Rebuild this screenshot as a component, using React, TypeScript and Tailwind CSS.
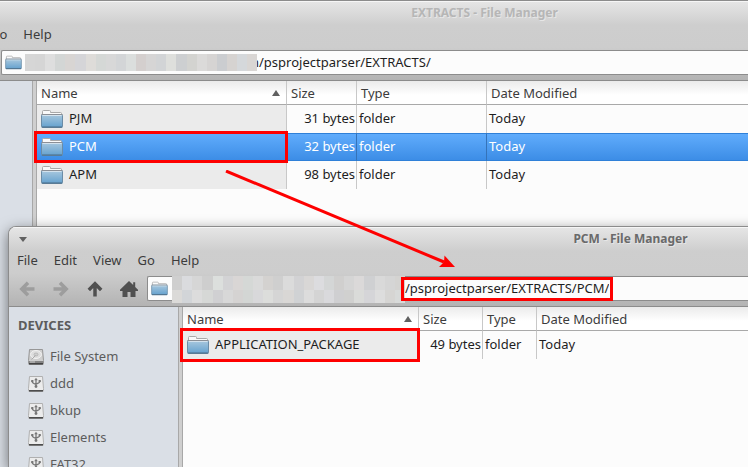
import type { ReactNode } from 'react';

const font = "font-['Noto_Sans','Open_Sans',sans-serif]";

function Folder({ className }: { className: string }) {
  return (
    <svg viewBox="0 0 22 20" className={className} aria-hidden="true">
      <defs>
        <linearGradient id="folder-front" x1="0" y1="0" x2="0" y2="1">
          <stop offset="0" stopColor="#a9c8de" />
          <stop offset="1" stopColor="#64a1ce" />
        </linearGradient>
      </defs>
      <path d="M1.5 6V2.500q0-1 1-1h6q1 0 1 1v1h10q1 0 1 1V6z" fill="#fafafa" stroke="#a9a9a9" />
      <rect x="0.5" y="5.500" width="21" height="13" rx="1" fill="url(#folder-front)" stroke="#6b8ca6" />
      <path d="M0.5 5.500h21" stroke="#8b8f96" />
      <path d="M1.500 6.500h19" stroke="#d3e2ed" />
      <path d="M1 18h20" stroke="#4b6b84" />
    </svg>
  );
}

function Drive() {
  return (
    <svg viewBox="0 0 16 16" className="size-4 shrink-0" aria-hidden="true">
      <path d="M1.500.500h13l1 11v3q0 1-1 1h-13q-1 0-1-1v-3z" fill="#cfcfcf" stroke="#979797" />
      <ellipse cx="8" cy="5.500" rx="5.500" ry="4" fill="#dedede" stroke="#f2f2f2" />
      <ellipse cx="8" cy="5.500" rx="2" ry="1.500" fill="#cfcfcf" stroke="#aaa" strokeWidth=".6" />
      <path d="M7.500 6.500 3.500 10.500" stroke="#aaa" />
      <path d="M1 12h14v3H1z" fill="#858585" />
      <path d="M1 14.800h14" stroke="#3c3c3c" strokeWidth="1.400" />
      <path d="M2 13h5" stroke="#ccc" />
    </svg>
  );
}

function UsbDrive() {
  return (
    <svg viewBox="0 0 16 16" className="size-4 shrink-0" aria-hidden="true">
      <path d="M1.500.500h13l1 12v2q0 1-1 1h-13q-1 0-1-1v-2z" fill="#ececec" stroke="#b0b0b0" />
      <path d="M1 14.800h14" stroke="#3c3c3c" strokeWidth="1.400" />
      <path d="M8 3v7M4.300 5v.8q0 1.500 3.700 2.700M11.700 5v.8q0 1.200-3.700 2.200" fill="none" stroke="#777" strokeWidth="1.300" />
      <path d="M6.200 4.200 8 1.800l1.800 2.400z" fill="#777" />
      <path d="M3.200 4h2.200v2H3.200zM10.600 4h2.200v2h-2.200z" fill="#777" />
      <circle cx="8" cy="10.500" r="1.400" fill="#777" />
    </svg>
  );
}

function Arrow({ className }: { className: string }) {
  return (
    <svg viewBox="0 0 16 16" className={`size-4 fill-none ${className}`} aria-hidden="true">
      <path d="M9 1.800 2.800 8 9 14.200M3.500 8h12" strokeWidth="3.500" />
    </svg>
  );
}

function NavButtons() {
  const cell = 'flex w-[34px] items-center justify-center';
  return (
    <div className="mr-px flex">
      <button aria-label="Back" disabled className={cell}>
        <Arrow className="stroke-[#9d9d9d]" />
      </button>
      <button aria-label="Forward" disabled className={cell}>
        <Arrow className="rotate-180 stroke-[#9d9d9d]" />
      </button>
      <button aria-label="Up" className={cell}>
        <Arrow className="rotate-90 stroke-[#505050]" />
      </button>
      <button aria-label="Home" className={cell}>
        <svg viewBox="0 0 18 16" className="h-4 w-[18px] fill-[#505050]">
          <path d="M9 0 13.200 4V1.200h2V6L18 8.800V10h-2.500v6h-5v-5h-3v5h-5v-6H0V8.800z" />
        </svg>
      </button>
    </div>
  );
}

const topRow = ['#d6d6d6', '#d5d5d5', '#dedede', '#d3d6d5', '#d8d5d3', '#d5d5d8', '#dedcd9', '#d5d8d6', '#d8d8d8', '#d3d5d7', '#dbdedd', '#d4cfce', '#d6d5d5', '#d2d4d6', '#dedfdc', '#cdcfd1', '#d3d3d0', '#dbdad9', '#d6d4d3', '#cbcdd0', '#d6d3d1', '#d5d8db', '#d9d6d4'];
const upperRow = ['#cfcfcf', '#dadbde', '#d6d6d6', '#cecece', '#dcdfdd', '#d3d3d5', '#d9d6d5', '#d5d8d6', '#dadada', '#d4d2d0', '#cfcfcf', '#dbdbdb', '#d2d2d4', '#d9d7d6', '#dcdcdf', '#d4d6d6', '#d0cfce', '#d5d5d5', '#dbd9d9', '#cfd0d2', '#d9d9d9', '#d5d5d5', '#d4d3d1'];
const lowerRow = ['#dbdad8', '#d2d5d8', '#dcdcdc', '#d6d8d6', '#d0d0d2', '#d8d8d8', '#d5d3d2', '#d3d6d4', '#d8d8da', '#dcdddb', '#d5d5d5', '#d9d7d5', '#d0d2d4', '#dcdcdc', '#d4d4d4', '#d9d9dc', '#cfcfd1', '#d0d0cf', '#dadbd9', '#d5d5d8', '#dddddd', '#d6d5d3', '#d8dad9'];

function Mosaic({ rows, className }: { rows: string[][]; className: string }) {
  return (
    <div className={`z-10 flex shrink-0 flex-col ${className}`}>
      {rows.map((row, i) => (
        <div key={i} className="flex flex-1">
          {row.map((color, j) => (
            <span key={j} className="flex-1" style={{ backgroundColor: color }} />
          ))}
        </div>
      ))}
    </div>
  );
}

type Entry = { name: string; size: string; selected?: boolean; marked?: boolean };

function FileTable({ entries, cols }: { entries: Entry[]; cols: [string, string, string] }) {
  const th = 'h-6 border-b border-[#a9a9a9] bg-linear-to-b from-[#ebebeb] to-white to-60% pl-1 text-left font-normal text-[#3c3c3c]';
  const line = 'border-r border-r-[#c8c8c8]';
  return (
    <table className="w-full table-fixed border-separate border-spacing-0">
      <colgroup>
        <col className={cols[0]} />
        <col className={cols[1]} />
        <col className={cols[2]} />
        <col />
      </colgroup>
      <thead>
        <tr>
          <th className={`${th} ${line}`}>
            <div className="flex items-center justify-between pr-1.5">
              Name
              <svg viewBox="0 0 8 6" className="h-1.5 w-2 fill-[#606060]"><path d="M4 0 8 6H0z" /></svg>
            </div>
          </th>
          <th className={`${th} ${line}`}>Size</th>
          <th className={`${th} ${line}`}>Type</th>
          <th className={th}>Date Modified</th>
        </tr>
      </thead>
      <tbody>
        {entries.map((e) => {
          const tone = e.selected
            ? 'border-y border-y-[#2f80d8] bg-linear-to-b from-[#60acfc] to-[#3c8de6] text-white'
            : 'text-[#1e1e1e]';
          const edge = e.selected ? 'border-r border-r-[#3573b8]' : line;
          return (
            <tr key={e.name}>
              <td className={`relative h-7 py-0 pl-1 ${tone} ${edge} ${e.selected ? '' : 'bg-[#ebebeb]'}`}>
                <div className="flex items-center gap-1.5">
                  <Folder className="h-5 w-[22px] shrink-0" />
                  <span className="pb-0.5">{e.name}</span>
                </div>
                {e.marked && <span className="pointer-events-none absolute -inset-y-[3px] -right-0.5 -left-[3px] z-10 border-3 border-[#fe0000]" />}
              </td>
              <td className={`h-7 pr-px pb-0.5 text-right ${tone} ${edge}`}>{e.size}</td>
              <td className={`h-7 pb-0.5 pl-0.5 ${tone} ${edge}`}>folder</td>
              <td className={`h-7 pb-0.5 pl-0.5 ${tone}`}>Today</td>
            </tr>
          );
        })}
      </tbody>
    </table>
  );
}

type WindowProps = {
  title: string;
  titleColor: string;
  className: string;
  menu: string[];
  menuClass: string;
  path: ReactNode;
  devices: string[];
  children: ReactNode;
};

function FileWindow({ title, titleColor, className, menu, menuClass, path, devices, children }: WindowProps) {
  return (
    <section className={`absolute bottom-0 flex w-[1244px] flex-col overflow-hidden border-t border-l border-[#8c8c8c] bg-[#fcfcfc] ${className}`}>
      <header className="flex flex-col border-b border-[#8c8c8c] bg-[linear-gradient(#e6e6e6,#cecece_24px,#cdcdcd_46px,#b3b3b3)] shadow-[inset_0_1px_#f6f6f6]">
        <div className="relative flex h-6 items-center justify-center">
          <button aria-label="Window menu" className="absolute left-2.5 p-0">
            <svg viewBox="0 0 8 5" className="h-[5px] w-2 fill-[#606060]"><path d="M0 0h8L4 5z" /></svg>
          </button>
          <h1 className={`text-[12px] font-bold ${titleColor} [text-shadow:1px_1px_#e6e6e6]`}>{title}</h1>
        </div>
        <nav className={`flex h-5 items-center text-[#3c3c3c] ${menuClass}`}>
          {menu.map((m) => (
            <button key={m} className="px-2 pb-0.5">{m}</button>
          ))}
        </nav>
        <div className="flex py-[5px] pl-px">
          <NavButtons />
          <div className="flex h-[25px] flex-1 items-center rounded-l-xs border border-r-0 border-[#8c8c8c] bg-[#fcfcfc] pl-[3px]">
            <Folder className="h-[15px] w-[17px] shrink-0" />
            {path}
          </div>
        </div>
      </header>
      <div className="flex flex-1">
        <aside className="w-[170px] shrink-0 border-r border-[#a8a8a8] bg-[#dadfe6] text-[#5c5c5c]">
          {devices.length > 0 && (
            <>
              <h2 className="flex h-9 items-center pl-[9px] font-bold">DEVICES</h2>
              <ul>
                {devices.map((d, i) => (
                  <li key={d} className="flex h-[27px] items-center gap-1.5 pl-[19px]">
                    {i === 0 ? <Drive /> : <UsbDrive />}
                    <span className="pb-0.5">{d}</span>
                  </li>
                ))}
              </ul>
            </>
          )}
        </aside>
        <div className="w-1 shrink-0 border-r border-[#a8a8a8] bg-[#cfcfcf]" />
        <main className="min-w-0 flex-1">{children}</main>
      </div>
    </section>
  );
}

const field = 'h-5 pb-0.5 text-[#1e1e1e] outline-none';

export default function App() {
  return (
    <div className={`relative h-screen overflow-hidden bg-[#dadfe6] text-[13px] leading-5 ${font}`}>
      <FileWindow
        title="EXTRACTS - File Manager"
        titleColor="text-[#b6b6b6]"
        className="top-0 -left-[138px]"
        menu={['Go', 'Help']}
        menuClass="pl-[119px]"
        devices={[]}
        path={
          <>
            <Mosaic rows={[topRow]} className="ml-[3px] h-[17px] w-[232px]" />
            <input aria-label="Location" defaultValue="n/psprojectparser/EXTRACTS/" className={`-ml-1.5 min-w-0 flex-1 ${field}`} />
          </>
        }
      >
        <FileTable
          cols={['w-[250px]', 'w-[70px]', 'w-[130px]']}
          entries={[
            { name: 'PJM', size: '31 bytes' },
            { name: 'PCM', size: '32 bytes', selected: true, marked: true },
            { name: 'APM', size: '98 bytes' },
          ]}
        />
      </FileWindow>

      <FileWindow
        title="PCM - File Manager"
        titleColor="text-[#6a6a6a]"
        className="top-[226px] left-2 rounded-tl-lg shadow-[0_4px_14px_rgba(0,0,0,0.5)]"
        menu={['File', 'Edit', 'View', 'Go', 'Help']}
        menuClass=""
        devices={['File System', 'ddd', 'bkup', 'Elements', 'FAT32']}
        path={
          <>
            <Mosaic rows={[upperRow, lowerRow]} className="-mb-0.5 ml-1 h-[27px] w-[233px]" />
            <div className="relative">
              <input aria-label="Location" defaultValue="/psprojectparser/EXTRACTS/PCM/" className={`field-sizing-content block ${field}`} />
              <span className="pointer-events-none absolute -inset-x-1 -inset-y-0.5 z-10 border-3 border-[#fe0000]" />
            </div>
          </>
        }
      >
        <FileTable
          cols={['w-[236px]', 'w-[64px]', 'w-[54px]']}
          entries={[{ name: 'APPLICATION_PACKAGE', size: '49 bytes', marked: true }]}
        />
      </FileWindow>

      <svg viewBox="0 0 232 100" className="pointer-events-none absolute top-[170px] left-[225px] z-20 h-[100px] w-[232px]" aria-hidden="true">
        <path d="M1 1 219 92" stroke="#fe0000" strokeWidth="3" />
        <path d="M230 97 214 97 219 92 219.500 85.500z" fill="#fe0000" />
      </svg>
    </div>
  );
}
